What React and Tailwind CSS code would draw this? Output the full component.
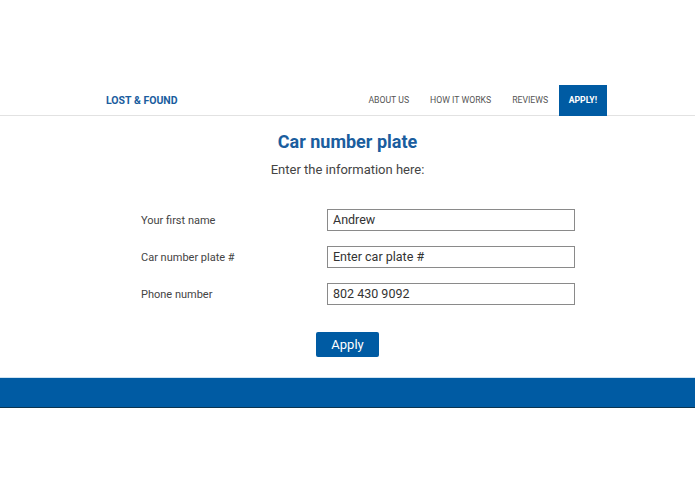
import React from "react";

const fields = [
    { label: "Your first name", value: "Andrew" },
    { label: "Car number plate #", value: "Enter car plate #" },
    { label: "Phone number", value: "802 430 9092" },
];

const App = () => {
    return (
        <div className="w-[695px] h-[494px] bg-white font-['Roboto',sans-serif] overflow-hidden">
            <div className="h-[85px]"></div>
            <div className="flex items-center h-[31px] border-b border-[#e2e2e2] pl-[106px] pr-[88px]">
                <p className="text-[10.5px] font-bold text-[#1a5d9e] pt-[2px]">LOST &amp; FOUND</p>
                <div className="ml-auto flex items-stretch h-[31px] text-[8.7px] text-[#555]">
                    <a className="flex items-center px-[10.5px] pt-[2px]">ABOUT US</a>
                    <a className="flex items-center px-[10.5px] pt-[2px]">HOW IT WORKS</a>
                    <a className="flex items-center px-[10.5px] pt-[2px]">REVIEWS</a>
                    <a className="flex items-center px-[10px] pt-[2px] bg-[#005ba3] text-white font-bold">APPLY!</a>
                </div>
            </div>
            <div className="flex flex-col items-center">
                <h1 className="mt-[15px] text-[18px] leading-[22px] font-bold text-[#1a5d9e]">Car number plate</h1>
                <p className="mt-[9px] text-[13px] leading-[16px] text-[#444]">Enter the information here:</p>
            </div>
            <div className="mt-[31px] flex flex-col gap-[15px] pl-[141px]">
                {fields.map((f) => (
                    <div key={f.label} className="flex items-center h-[22px]">
                        <p className="w-[186px] text-[11px] text-[#444] mt-[3px]">{f.label}</p>
                        <div className="w-[248px] h-[22px] border border-[#8a8a8a] flex items-center px-[5px] text-[12.5px] text-[#333]">
                            {f.value}
                        </div>
                    </div>
                ))}
            </div>
            <div className="mt-[27px] flex justify-center">
                <button className="w-[63px] h-[25px] rounded-[2px] bg-[#005ba3] text-white text-[13px]">Apply</button>
            </div>
            <div className="mt-[20px] h-[31px] bg-[#005ba3] border-t border-[#cfe3f2] border-b border-b-[#0b3550]"></div>
        </div>
    );
};

export default App;
